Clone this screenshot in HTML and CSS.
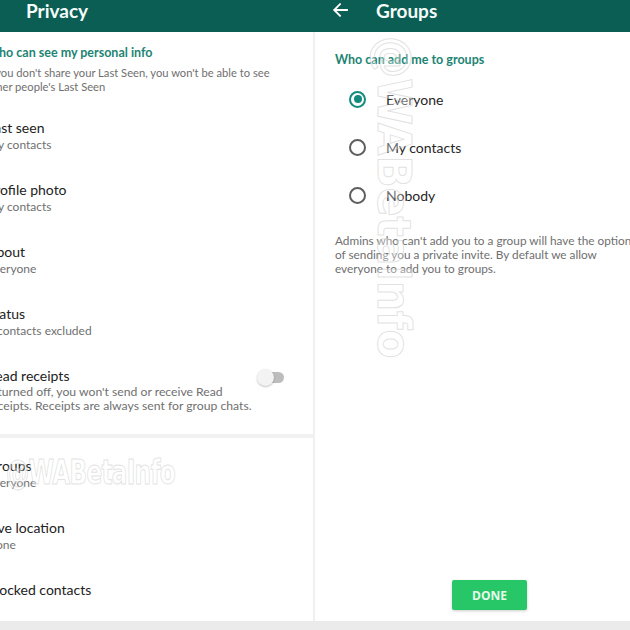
FILE: index.html
```html
<!DOCTYPE html>
<html>
<head>
<meta charset="utf-8">
<link rel="stylesheet" href="styles.css">
</head>
<body>
<div class="screen">
  <section class="panel panel-left">
    <header class="appbar"><span class="appbar-title title-privacy">Privacy</span></header>
    <div class="content list">
      <div class="section-head">
        <div class="section-title">Who can see my personal info</div>
        <div class="section-desc">If you don't share your Last Seen, you won't be able to see<br>other people's Last Seen</div>
      </div>
      <div class="item"><div class="item-title">Last seen</div><div class="item-sub">My contacts</div></div>
      <div class="item"><div class="item-title">Profile photo</div><div class="item-sub">My contacts</div></div>
      <div class="item"><div class="item-title">About</div><div class="item-sub">Everyone</div></div>
      <div class="item"><div class="item-title">Status</div><div class="item-sub">3 contacts excluded</div></div>
      <div class="item item-toggle">
        <div class="item-text">
          <div class="item-title">Read receipts</div>
          <div class="item-sub multi">If turned off, you won't send or receive Read<br>receipts. Receipts are always sent for group chats.</div>
        </div>
        <div class="switch"><span class="switch-thumb"></span></div>
      </div>
      <div class="divider"></div>
      <div class="item item-first"><div class="item-title">Groups</div><div class="item-sub">Everyone</div></div>
      <div class="item"><div class="item-title">Live location</div><div class="item-sub">None</div></div>
      <div class="item"><div class="item-title">Blocked contacts</div></div>
      <div class="watermark wm-h">@WABetaInfo</div>
    </div>
  </section>
  <section class="panel panel-right">
    <header class="appbar">
      <svg class="back" width="16" height="14" viewBox="0 0 16 14"><path d="M15 7H2.5M8 1.2L2.2 7 8 12.8" fill="none" stroke="#fff" stroke-width="1.8" stroke-linecap="square"/></svg>
      <span class="appbar-title title-groups">Groups</span>
    </header>
    <div class="content groups">
      <div class="section-title">Who can add me to groups</div>
      <div class="radios">
        <div class="radio-row"><span class="radio checked"></span><span class="radio-label">Everyone</span></div>
        <div class="radio-row"><span class="radio"></span><span class="radio-label">My contacts</span></div>
        <div class="radio-row"><span class="radio"></span><span class="radio-label">Nobody</span></div>
      </div>
      <div class="groups-desc">Admins who can't add you to a group will have the option<br>of sending you a private invite. By default we allow<br>everyone to add you to groups.</div>
      <button class="done">DONE</button>
      <div class="watermark wm-v">@WABetaInfo</div>
    </div>
  </section>
</div>
</body>
</html>
```

FILE: styles.css
```css
* { box-sizing: border-box; }
html, body { margin: 0; padding: 0; }
body {
  width: 630px;
  height: 630px;
  overflow: hidden;
  background: #ebebeb;
  font-family: Lato, "Open Sans", "Liberation Sans", sans-serif;
}
.screen {
  display: grid;
  grid-template-columns: 315px 315px;
  height: 621px;
  background: #f0f0f0;
}
.panel {
  display: flex;
  flex-direction: column;
  min-height: 0;
}
.appbar {
  height: 32px;
  flex: 0 0 32px;
  background: #0b5e54;
  display: flex;
  align-items: flex-start;
  color: #fff;
}
.appbar-title {
  font-weight: 700;
  font-size: 19px;
  line-height: 21px;
  color: #f4fbf9;
}
.title-privacy { margin-left: 26px; }
.back { margin: 3px 0 0 17px; }
.title-groups { margin-left: 28px; }
.content {
  flex: 1;
  background: #fff;
  position: relative;
  overflow: hidden;
}
.panel-left .content { margin-right: 2px; }
.section-head {
  margin-left: -14px;
  padding: 13px 0 13px 0;
}
.section-title {
  font-weight: 700;
  font-size: 12.5px;
  line-height: 16px;
  color: #1d8474;
  white-space: nowrap;
}
.section-desc {
  margin-top: 5px;
  font-size: 11.2px;
  line-height: 14px;
  color: #6f6f6f;
  white-space: nowrap;
}
.item {
  height: 62px;
  padding-top: 12px;
  margin-left: -13px;
}
.item-title {
  font-size: 14px;
  line-height: 18px;
  color: #222;
  white-space: nowrap;
}
.item-sub {
  font-size: 12px;
  line-height: 16px;
  color: #707070;
  white-space: nowrap;
}
.item-sub.multi { line-height: 14px; font-size: 12.2px; }
.item-toggle {
  height: 79px;
  display: flex;
  justify-content: space-between;
}
.switch {
  margin: 5px 29px 0 0;
  width: 23px;
  height: 11px;
  border-radius: 6px;
  background: #bdbdbd;
  position: relative;
}
.switch-thumb {
  position: absolute;
  left: -4px;
  top: -3px;
  width: 17px;
  height: 17px;
  border-radius: 50%;
  background: #f3f3f3;
  box-shadow: 0 1px 2px rgba(0,0,0,0.25);
}
.divider {
  height: 4px;
  background: #f1f1f1;
  margin-bottom: 7px;
}
.groups {
  padding: 20px 0 11px 20px;
  display: flex;
  flex-direction: column;
}
.groups .section-title { font-size: 12.5px; }
.radios { margin-top: 7px; }
.radio-row {
  height: 48px;
  display: flex;
  align-items: center;
}
.radio {
  width: 17px;
  height: 17px;
  margin-left: 14px;
  border: 2px solid #5f5f5f;
  border-radius: 50%;
  position: relative;
}
.radio.checked { border-color: #128c7e; }
.radio.checked::after {
  content: "";
  position: absolute;
  left: 2.5px;
  top: 2.5px;
  width: 8px;
  height: 8px;
  border-radius: 50%;
  background: #128c7e;
}
.radio-label {
  margin-left: 20px;
  font-size: 14px;
  color: #262626;
}
.groups-desc {
  margin-top: 15px;
  font-size: 11.8px;
  line-height: 14px;
  color: #6f6f6f;
  white-space: nowrap;
}
.done {
  margin-top: auto;
  margin-left: 117px;
  align-self: flex-start;
  width: 75px;
  height: 30px;
  border: 0;
  border-radius: 2px;
  background: #27c768;
  color: #e6fbec;
  font-family: "Open Sans", Lato, sans-serif;
  font-weight: 700;
  font-size: 12px;
  box-shadow: 0 1px 3px rgba(0,0,0,0.2);
}
.watermark {
  position: absolute;
  font-family: "DejaVu Sans Condensed", "DejaVu Sans", sans-serif;
  font-weight: 700;
  color: rgba(255,255,255,0.35);
  -webkit-text-stroke: 1px rgba(190,190,190,0.45);
  white-space: nowrap;
  pointer-events: none;
}
.wm-h {
  left: 6px;
  top: 420px;
  font-size: 34px;
  letter-spacing: -1px;
  transform: scaleX(0.76);
  transform-origin: left center;
}
.wm-v {
  left: 52px;
  top: 4px;
  font-size: 47px;
  writing-mode: vertical-rl;
  letter-spacing: 0;
}
```
